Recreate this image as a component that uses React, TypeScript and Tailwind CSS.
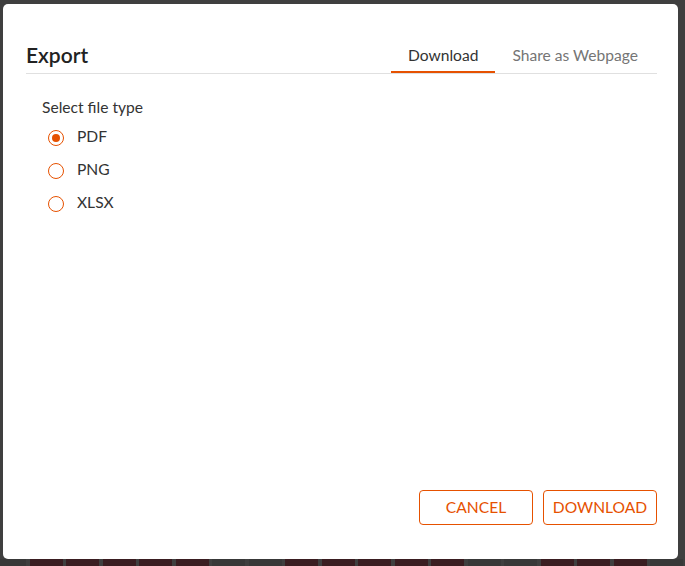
import { useState } from 'react';

const cells = ['g', 'r', 'r', 'r', 'r', 'r', 'g', 'g', 'r', 'r', 'r', 'r', 'r', 'g', 'g', 'r', 'r', 'r', 'g', 'g'];
const types = ['PDF', 'PNG', 'XLSX'];

export default function App() {
  const [tab, setTab] = useState('download');
  const [fileType, setFileType] = useState('PDF');

  return (
    <div className="relative w-[685px] h-[566px] overflow-hidden bg-[#3f3f3f] flex flex-col justify-end" style={{ fontFamily: 'Lato, "Open Sans", sans-serif' }}>
      {/* Background strip peeking under the dialog */}
      <div className="flex gap-[3.5px] h-[7px] -ml-[7px]">
        {cells.map((c, i) => (
          <div key={i} className={`w-[33px] shrink-0 h-full ${c === 'r' ? 'bg-[#3a1d21]' : 'bg-[#383838]'}`} />
        ))}
      </div>

      {/* Dialog */}
      <div className="absolute left-[3px] top-[4px] w-[675px] h-[555px] bg-white rounded-[5px] flex flex-col pl-[23px] pr-[21px] pt-[39px] pb-[34px]">
        {/* Header */}
        <div className="flex items-end justify-between border-b border-[#e0e0e0]">
          <h2 className="text-[21px] leading-[24px] pb-[6px] font-semibold text-[#222]">Export</h2>
          <div className="flex mr-[2px]">
            <button
              onClick={() => setTab('download')}
              className={`px-[17px] pb-[6px] text-[15.6px] leading-[20px] border-b-2 ${tab === 'download' ? 'border-[#e65100] text-[#333]' : 'border-transparent text-[#757575]'}`}
            >
              Download
            </button>
            <button
              onClick={() => setTab('share')}
              className={`px-[17px] pb-[6px] text-[15.6px] leading-[20px] border-b-2 ${tab === 'share' ? 'border-[#e65100] text-[#333]' : 'border-transparent text-[#757575]'}`}
            >
              Share as Webpage
            </button>
          </div>
        </div>

        {/* File type */}
        <div className="px-4 mt-[23px]">
          <p className="text-[15.6px] leading-[20px] text-[#333]">Select file type</p>
          <div className="mt-[4px] flex flex-col">
            {types.map((t) => (
              <label key={t} className="flex items-center h-[33px] cursor-pointer" onClick={() => setFileType(t)}>
                <span className="ml-[6px] w-4 h-4 rounded-full border-[1.5px] border-[#e65100] flex items-center justify-center">
                  {fileType === t && <span className="w-[8px] h-[8px] rounded-full bg-[#e65100]" />}
                </span>
                <span className="ml-[13px] pb-[4px] text-[15.6px] leading-[20px] text-[#333]">{t}</span>
              </label>
            ))}
          </div>
        </div>

        <div className="flex-1" />

        {/* Actions */}
        <div className="flex justify-end gap-[10px]">
          <button className="w-[114px] h-[35px] rounded-[4px] border border-[#e65100] text-[#e65100] text-[15.6px] uppercase">
            Cancel
          </button>
          <button className="w-[114px] h-[35px] rounded-[4px] border border-[#e65100] text-[#e65100] text-[15.6px] uppercase">
            Download
          </button>
        </div>
      </div>
    </div>
  );
}
